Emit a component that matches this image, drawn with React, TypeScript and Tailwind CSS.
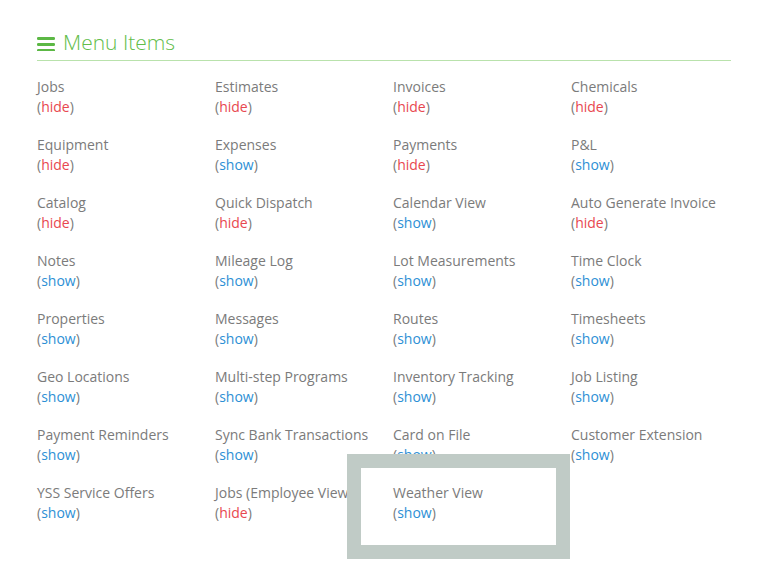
import React from "react";

type Item = { label: string; state: "hide" | "show" };

const items: Item[] = [
  { label: "Jobs", state: "hide" },
  { label: "Estimates", state: "hide" },
  { label: "Invoices", state: "hide" },
  { label: "Chemicals", state: "hide" },
  { label: "Equipment", state: "hide" },
  { label: "Expenses", state: "show" },
  { label: "Payments", state: "hide" },
  { label: "P&L", state: "show" },
  { label: "Catalog", state: "hide" },
  { label: "Quick Dispatch", state: "hide" },
  { label: "Calendar View", state: "show" },
  { label: "Auto Generate Invoice", state: "hide" },
  { label: "Notes", state: "show" },
  { label: "Mileage Log", state: "show" },
  { label: "Lot Measurements", state: "show" },
  { label: "Time Clock", state: "show" },
  { label: "Properties", state: "show" },
  { label: "Messages", state: "show" },
  { label: "Routes", state: "show" },
  { label: "Timesheets", state: "show" },
  { label: "Geo Locations", state: "show" },
  { label: "Multi-step Programs", state: "show" },
  { label: "Inventory Tracking", state: "show" },
  { label: "Job Listing", state: "show" },
  { label: "Payment Reminders", state: "show" },
  { label: "Sync Bank Transactions", state: "show" },
  { label: "Card on File", state: "show" },
  { label: "Customer Extension", state: "show" },
  { label: "YSS Service Offers", state: "show" },
  { label: "Jobs (Employee View)", state: "hide" },
  { label: "Weather View", state: "show" },
];

export default function App() {
  return (
    <div
      className="relative w-[772px] h-[582px] bg-white overflow-hidden"
      style={{ fontFamily: '"Open Sans", "Liberation Sans", sans-serif' }}
    >
      <div className="pl-[37px] pt-[28px]">
        <div className="w-[694px] h-[33px] border-b border-[#b9e2ac] flex items-start gap-[8px]">
          <svg width="18" height="16" viewBox="0 0 18 16" className="mt-[7px]">
            <rect x="0" y="2" width="18" height="3" rx="1.2" fill="#5cb845" />
            <rect x="0" y="8" width="18" height="3" rx="1.2" fill="#5cb845" />
            <rect x="0" y="14" width="18" height="3" rx="1.2" fill="#5cb845" />
          </svg>
          <span className="text-[21px] leading-[28px] font-light text-[#62bd4a]">Menu Items</span>
        </div>
        <div className="grid grid-cols-[178px_178px_178px_178px] gap-y-[18px] pt-[16px]">
          {items.map((it) => (
            <div key={it.label} className="text-[14px] leading-[20px] text-[#7b7b7b] whitespace-nowrap">
              <div>{it.label}</div>
              <div>
                (
                <span className={it.state === "hide" ? "text-[#e8474f]" : "text-[#2d8fd5]"}>
                  {it.state}
                </span>
                )
              </div>
            </div>
          ))}
        </div>
      </div>
      <div className="absolute left-[347px] top-[454px] w-[223px] h-[105px] border-[14px] border-[#c0cbc6] pointer-events-none" />
    </div>
  );
}
